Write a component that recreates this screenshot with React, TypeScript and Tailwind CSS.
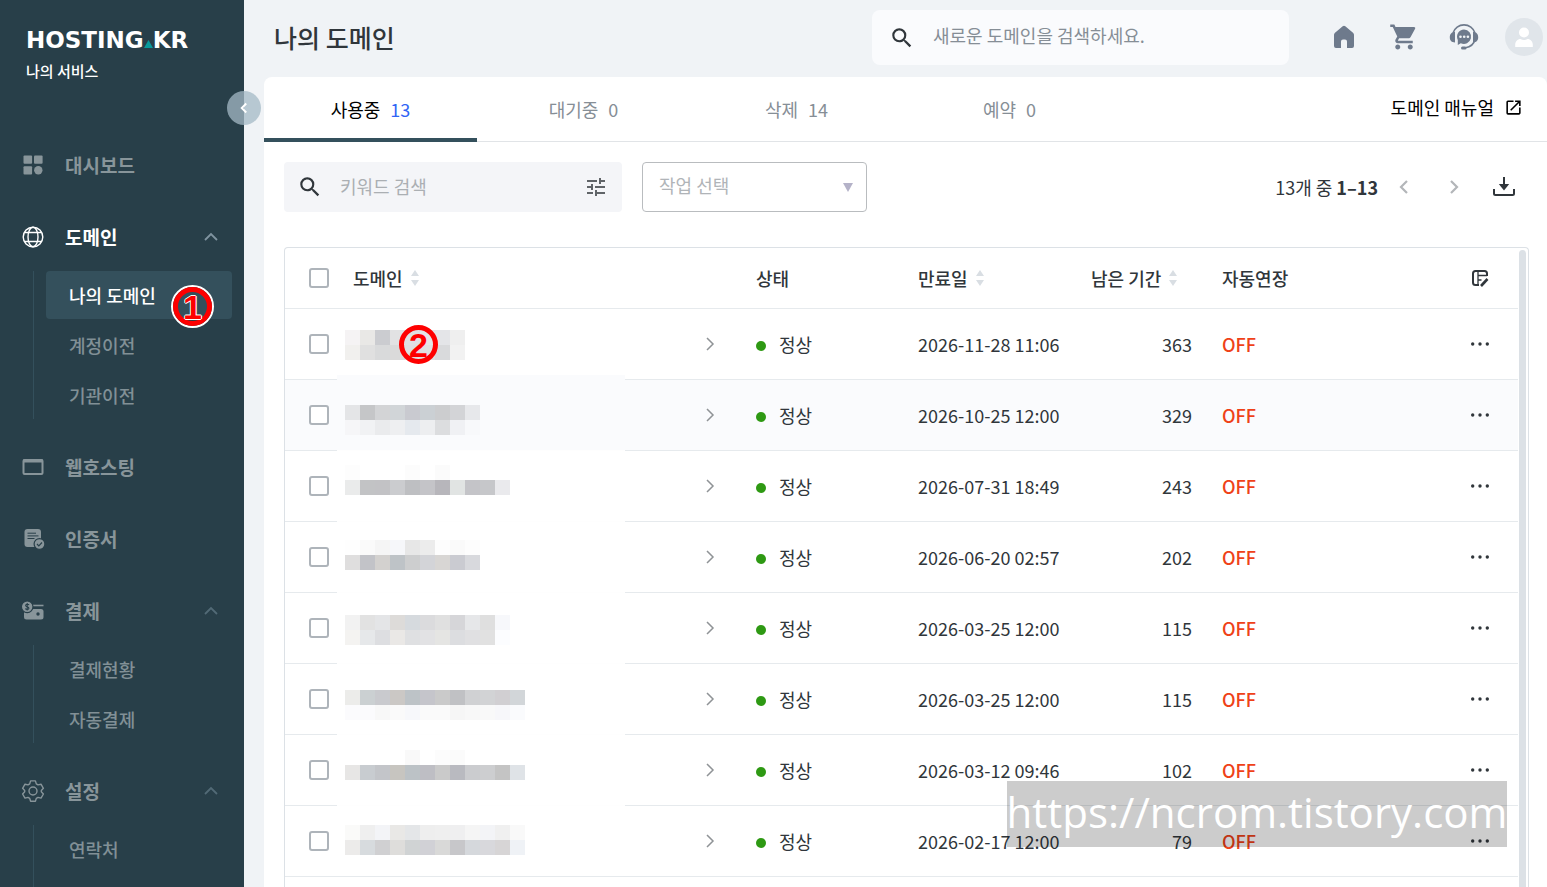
import type { ReactNode } from "react";
import { MdOpenInNew, MdSearch, MdShoppingCart, MdTune } from "react-icons/md";

type MenuEntry = {
  label: string;
  icon: ReactNode;
  active?: boolean;
  children?: { label: string; active?: boolean }[];
};

const DashboardIcon = () => (
  <svg width="24" height="24" viewBox="0 0 24 24" fill="currentColor" aria-hidden="true">
    <rect x="2.5" y="2.5" width="8.6" height="8.2" rx="1" />
    <rect x="13" y="2.5" width="8.6" height="8.2" rx="1" />
    <rect x="2.5" y="13.2" width="8.6" height="8.2" rx="1" />
    <circle cx="17.3" cy="17.3" r="4.2" />
  </svg>
);

const GlobeIcon = () => (
  <svg width="24" height="24" viewBox="0 0 24 24" fill="none" stroke="currentColor" strokeWidth="1.4" aria-hidden="true">
    <circle cx="12" cy="12" r="9.8" />
    <ellipse cx="12" cy="12" rx="5" ry="9.8" />
    <path d="M3.500 7.500h17M3.500 16.500h17" />
  </svg>
);

const WindowIcon = () => (
  <svg width="24" height="24" viewBox="0 0 24 24" fill="none" stroke="currentColor" aria-hidden="true">
    <rect x="2.500" y="5" width="19" height="14" rx="1" strokeWidth="2" />
    <path d="M2 6h20" strokeWidth="3" />
  </svg>
);

const CertificateIcon = () => (
  <svg width="24" height="24" viewBox="0 0 24 24" aria-hidden="true">
    <rect x="3.500" y="2" width="16.500" height="18" rx="3" fill="currentColor" />
    <path d="M6.500 6.200h8.500M6.500 8.900h11M6.500 11.500h7" stroke="#283f49" strokeWidth="1" />
    <circle cx="18.500" cy="17" r="5.400" fill="currentColor" stroke="#283f49" strokeWidth="1.200" />
    <path d="M16 17l1.800 1.800 3.200-3.300" fill="none" stroke="#283f49" strokeWidth="1.200" />
  </svg>
);

const PaymentIcon = () => (
  <svg width="24" height="24" viewBox="0 0 24 24" aria-hidden="true">
    <path d="M12 6.500h10.500" stroke="currentColor" strokeWidth="1.600" />
    <path d="M3 10h17a2.500 2.500 0 0 1 2.500 2.500V18a2.500 2.500 0 0 1-2.500 2.500H5.500A2.500 2.500 0 0 1 3 18z" fill="currentColor" />
    <circle cx="6.200" cy="7.800" r="5.800" fill="currentColor" stroke="#283f49" strokeWidth="1.200" />
    <path d="M8 6C7.600 5 4.600 4.800 4.600 6.500c0 1.600 3.300 1 3.300 2.700 0 1.700-3 1.500-3.500.3M6.200 4v7.600" fill="none" stroke="#283f49" strokeWidth="1.100" />
    <circle cx="17" cy="15" r="1.700" fill="#283f49" />
  </svg>
);

const GearIcon = () => (
  <svg width="24" height="24" viewBox="0 0 24 24" fill="none" stroke="currentColor" strokeWidth="1.400" strokeLinejoin="round" aria-hidden="true">
    <path d="M9.600 1.900h4.800l.9 3 1.700 1 3-.7 2.400 4.100-2.100 2.200v1.300l2.100 2.200-2.400 4.100-3-.7-1.700 1-.9 2.900H9.600l-.9-2.900-1.700-1-3 .7L1.600 15l2.100-2.200v-1.300L1.600 9.300 4 5.200l3 .7 1.700-1z" />
    <circle cx="12" cy="12" r="4" />
  </svg>
);

const menu: MenuEntry[] = [
  { label: "대시보드", icon: <DashboardIcon /> },
  {
    label: "도메인",
    icon: <GlobeIcon />,
    active: true,
    children: [{ label: "나의 도메인", active: true }, { label: "계정이전" }, { label: "기관이전" }],
  },
  { label: "웹호스팅", icon: <WindowIcon /> },
  { label: "인증서", icon: <CertificateIcon /> },
  { label: "결제", icon: <PaymentIcon />, children: [{ label: "결제현황" }, { label: "자동결제" }] },
  { label: "설정", icon: <GearIcon />, children: [{ label: "연락처" }] },
];

type Row = { date: string; days: number; top: number; tiles: [string[], string[]] };

const rows: Row[] = [
  {
    date: "2026-11-28 11:06",
    days: 363,
    top: 21,
    tiles: [
      ["#f5f3f4", "#e9e8e6", "#cbccd0", "#e2e2e3", "#e0e0e2", "#e4e5e7", "#e4e5e8", "#efefef"],
      ["#f1f0ee", "#e0e0e0", "#d9dadb", "#dadada", "#dedfe1", "#dfe0e2", "#d9dadc", "#f2f2f2"],
    ],
  },
  {
    date: "2026-10-25 12:00",
    days: 329,
    top: 25,
    tiles: [
      ["#e4e5e7", "#c5c6c8", "#d3d4d6", "#d1d5d8", "#c9cad0", "#cbd0d4", "#cccdcf", "#d3d4d7", "#e7e8eb"],
      ["#f6f6f8", "#f1f2f4", "#eaebed", "#eeeff1", "#e5e9ee", "#edeef0", "#dcdddf", "#f0f1f4", "#f8f9fb"],
    ],
  },
  {
    date: "2026-07-31 18:49",
    days: 243,
    top: 14,
    tiles: [
      ["#fdfdfd", "#ffffff", "#ffffff", "#ffffff", "#fcfcfc", "#ffffff", "#fbfbfb"],
      ["#eaebeb", "#c2c3c5", "#c2c2c5", "#cbcccf", "#bebfc2", "#c4c4c8", "#b7b6bb", "#e1e4e3", "#c4c4c8", "#c6c7ca", "#eaeaed"],
    ],
  },
  {
    date: "2026-06-20 02:57",
    days: 202,
    top: 18,
    tiles: [
      ["#fefefe", "#fafafa", "#f5f5f5", "#f6f7fa", "#e7e7e7", "#ececec", "#fdfdfd", "#fafafa", "#fdfdfd"],
      ["#dfdede", "#c2c3c8", "#d3d1cf", "#bec3c7", "#cdcecf", "#d3d4d8", "#d8d6d4", "#cacbd1", "#d8d9dd"],
    ],
  },
  {
    date: "2026-03-25 12:00",
    days: 115,
    top: 22,
    tiles: [
      ["#f2f2f2", "#e2e2e2", "#e4e5e7", "#dddbd9", "#d6dade", "#dbdbdd", "#e0e0e0", "#d6d6d9", "#e6e7e9", "#dfdfdf", "#f7f8fb"],
      ["#f4f3f1", "#e6e8ea", "#dddee1", "#eae8e6", "#dfe0e2", "#e2e2e4", "#e5e5e3", "#dcdde0", "#e0e0e2", "#e1e1e1", "#fcfdff"],
    ],
  },
  {
    date: "2026-03-25 12:00",
    days: 115,
    top: 26,
    tiles: [
      ["#ececea", "#cbd0d2", "#c9cace", "#cbc8c5", "#bdc3c7", "#c5c5cb", "#cacaca", "#c0c1c4", "#d0d1d3", "#d2d3d5", "#d1cfd2", "#d2d6d9"],
      ["#fbfbfd", "#fbfbfd", "#f8f8f8", "#fafafa", "#f7f8fb", "#fafafa", "#fafafa", "#f6f6f6", "#f8f8f8", "#f9f9f9", "#f7f7fa", "#fafbfd"],
    ],
  },
  {
    date: "2026-03-12 09:46",
    days: 102,
    top: 15,
    tiles: [
      ["#ffffff", "#ffffff", "#ffffff", "#ffffff", "#f9f9f9", "#ffffff", "#fcfcfc", "#fbfbfb"],
      ["#e7e6e5", "#c8ccd0", "#c3c5c9", "#c7c5c0", "#bcc2c6", "#bebec4", "#cacaca", "#b9bac0", "#cbcccf", "#cdced0", "#c4c4c4", "#dfe3e7"],
    ],
  },
  {
    date: "2026-02-17 12:00",
    days: 79,
    top: 19,
    tiles: [
      ["#fafaf9", "#efefef", "#f3f4f7", "#e9e8e6", "#e4e6e8", "#eeeeee", "#efefef", "#efeff0", "#f5f5f5", "#f3f4f7", "#f0f0f0", "#f9f9f9"],
      ["#ecebea", "#d7dbde", "#d0d0d2", "#dedddb", "#d0d3d4", "#d1d1d6", "#d9d9d8", "#c7c7ca", "#d5d8dc", "#d8d8dc", "#d7d5d6", "#eff2f6"],
    ],
  },
];

function Chevron({ dir, size = 14, width = 2 }: { dir: "up" | "left" | "right"; size?: number; width?: number }) {
  const paths = { up: "M2 11l6-6 6 6", left: "M11 2L5 8l6 6", right: "M5 2l6 6-6 6" };
  return (
    <svg width={size} height={size} viewBox="0 0 16 16" fill="none" stroke="currentColor" strokeWidth={width} aria-hidden="true">
      <path d={paths[dir]} />
    </svg>
  );
}

function SortMark() {
  return (
    <svg width="8" height="16" viewBox="0 0 8 16" fill="#d9dee3" aria-hidden="true">
      <path d="M4 0l4 6H0zM4 16l4-6H0z" />
    </svg>
  );
}

function StepBadge({ n }: { n: string }) {
  return (
    <span className="flex size-[39px] items-center justify-center rounded-full border-[5px] border-[#fe0000] font-['Liberation_Sans',sans-serif] text-[34px] leading-none font-bold text-[#fe0000]">
      {n}
    </span>
  );
}

function Sidebar() {
  return (
    <aside className="relative z-10 w-[244px] shrink-0 bg-[#283f49]">
      <div className="flex h-full flex-col overflow-hidden">
        <div className="px-[26px] pt-6">
          <a href="#home" aria-label="HOSTING.KR" className="flex h-8 items-center font-['DejaVu_Sans',sans-serif] text-[23px] font-bold text-white">
            HOSTING
            <svg width="9" height="16" viewBox="0 0 9 16" fill="#0a9a9a" aria-hidden="true">
              <path d="M4.500 8L9 16H0z" />
            </svg>
            KR
          </a>
          <p className="mt-1 text-[15px] leading-[22px] font-medium text-white">나의 서비스</p>
        </div>
        <nav className="mt-[59px] flex flex-col gap-6">
          {menu.map((m) => (
            <div key={m.label} className="group shrink-0">
              <button
                type="button"
                className={`flex h-12 w-full items-center pr-[25px] pl-[21px] text-left text-[19px] font-bold ${m.active ? "text-white" : "text-[#88959a]"}`}
              >
                {m.icon}
                <span className="ml-5 flex-1">{m.label}</span>
                {m.children && (
                  <span className={m.active ? "text-[#8094a0]" : "text-[#526a76]"}>
                    <Chevron dir="up" size={16} width={1.8} />
                  </span>
                )}
              </button>
              {m.children && (
                <ul className="mt-[10px] mr-3 ml-[33px] flex flex-col gap-0.5 border-l border-[#34505c] pl-3 group-last:pb-16">
                  {m.children.map((c) => (
                    <li key={c.label} className="relative">
                      <a
                        href="#menu"
                        className={`flex h-12 items-center rounded pl-[23px] text-[18px] font-medium ${c.active ? "bg-[#34505c] text-white" : "text-[#819096]"}`}
                      >
                        {c.label}
                      </a>
                      {c.active && (
                        <span className="absolute top-3.5 right-[18px] rounded-full border-2 border-white [text-shadow:1px_0_#fff,-1px_0_#fff,0_1px_#fff,0_-1px_#fff]">
                          <StepBadge n="1" />
                        </span>
                      )}
                    </li>
                  ))}
                </ul>
              )}
            </div>
          ))}
        </nav>
      </div>
      <button
        type="button"
        aria-label="메뉴 접기"
        className="absolute top-[91px] -right-[17px] flex size-[34px] items-center justify-center rounded-full bg-[#a4b9c5]/75 text-white"
      >
        <Chevron dir="left" size={12} width={2.6} />
      </button>
    </aside>
  );
}

function TopBar() {
  return (
    <header className="flex h-[77px] items-start pr-1 pl-[10px]">
      <h1 className="flex h-[76px] flex-1 items-center text-[25px] font-medium text-[#30363b]">나의 도메인</h1>
      <label className="mt-[10px] flex h-[55px] w-[417px] items-center rounded-lg bg-[#fafbfd] pl-[17px] text-[#30363b]">
        <MdSearch size={26} />
        <input
          type="search"
          aria-label="새로운 도메인 검색"
          placeholder="새로운 도메인을 검색하세요."
          className="ml-[18px] min-w-0 flex-1 bg-transparent pb-1 text-[18px] outline-none placeholder:text-[#868e96]"
        />
      </label>
      <div className="ml-10 flex h-[74px] items-center text-[#6e7a8c]">
        <a href="#home" aria-label="홈" className="flex w-[30px] justify-center">
          <svg width="22" height="24" viewBox="0 0 22 24" fill="currentColor" aria-hidden="true">
            <path d="M9.700 1.300a2 2 0 0 1 2.600 0l7.700 6.500c.6.500 1 1.200 1 2V21a2 2 0 0 1-2 2h-5v-6.500a2 2 0 0 0-2-2h-2a2 2 0 0 0-2 2V23H3a2 2 0 0 1-2-2V9.800c0-.8.4-1.500 1-2z" />
          </svg>
        </a>
        <a href="#cart" aria-label="장바구니" className="ml-[30px]">
          <MdShoppingCart size={30} />
        </a>
        <a href="#support" aria-label="고객지원" className="ml-[30px]">
          <svg width="30" height="30" viewBox="0 0 30 30" fill="none" stroke="currentColor" aria-hidden="true">
            <path d="M4 11a11.500 11.500 0 0 1 22 0M26 17.500c-1 4-4.500 7.500-9.500 8.300" strokeWidth="1.600" />
            <path d="M6 10v10.500C2.500 20.500.800 18.500.800 15.300S2.500 10 6 10zM24 10v10.500c3.500 0 5.200-2 5.200-5.200S27.500 10 24 10z" fill="currentColor" stroke="none" />
            <path d="M15 7.500a7.200 7.200 0 1 1-3.200 13.700L8.800 23V18A7.200 7.200 0 0 1 15 7.500z" fill="currentColor" stroke="none" />
            <rect x="12" y="24.500" width="5.500" height="3" rx="1.500" fill="currentColor" stroke="none" />
            <g fill="#f0f3f6" stroke="none">
              <circle cx="11.500" cy="14.800" r="1.300" />
              <circle cx="15.200" cy="14.800" r="1.300" />
              <circle cx="18.900" cy="14.800" r="1.300" />
            </g>
          </svg>
        </a>
        <button type="button" aria-label="내 계정" className="ml-[26px] flex size-[38px] items-center justify-center rounded-full bg-[#e0e5ea]">
          <svg width="20" height="22" viewBox="0 0 20 22" fill="#fff" aria-hidden="true">
            <circle cx="10" cy="6.500" r="5" />
            <path d="M1.200 21v-2.500c0-3 2.300-5.500 5.300-5.500 2 1.300 5 1.300 7 0 3 0 5.300 2.500 5.300 5.500V21z" />
          </svg>
        </button>
      </div>
    </header>
  );
}

const tabs = [
  { label: "사용중", count: 13, active: true },
  { label: "대기중", count: 0 },
  { label: "삭제", count: 14 },
  { label: "예약", count: 0 },
];

function Tabs() {
  return (
    <div className="flex h-[65px] shrink-0 border-b border-[#e1e4e7]">
      {tabs.map((t) => (
        <button
          key={t.label}
          type="button"
          className={`-mb-px flex w-[213px] items-center justify-center gap-2.5 border-b-4 pt-1 text-[18px] ${t.active ? "border-[#34505c] text-black" : "border-transparent text-[#868e96]"}`}
        >
          <span>{t.label}</span>
          <span className={t.active ? "text-[#2f64f5]" : ""}>{t.count}</span>
        </button>
      ))}
      <a href="#manual" className="mr-6 mb-1 ml-auto flex items-center gap-2.5 text-[18px] text-black">
        도메인 매뉴얼
        <MdOpenInNew size={19} />
      </a>
    </div>
  );
}

function Toolbar() {
  return (
    <div className="flex h-[50px] shrink-0 items-center">
      <div className="flex h-full w-[338px] items-center rounded bg-[#f4f5f8] pr-[14px] pl-[13px]">
        <MdSearch size={26} color="#30363b" />
        <input
          type="search"
          aria-label="키워드 검색"
          placeholder="키워드 검색"
          className="ml-[17px] min-w-0 flex-1 bg-transparent pb-0.5 text-[18px] outline-none placeholder:text-[#abafb3]"
        />
        <button type="button" aria-label="상세 필터">
          <MdTune size={24} color="#606468" />
        </button>
      </div>
      <div className="relative ml-5 h-full w-[225px]">
        <select
          aria-label="작업 선택"
          className="h-full w-full appearance-none rounded border border-[#b9bcbf] bg-white px-4 pb-1 text-[18px] text-[#b0b4b8]"
        >
          <option>작업 선택</option>
        </select>
        <svg className="pointer-events-none absolute top-[21px] right-[14px]" width="10" height="9" viewBox="0 0 10 9" fill="#b4b2c8" aria-hidden="true">
          <path d="M0 0h10L5 9z" />
        </svg>
      </div>
      <div className="mr-[14px] ml-auto flex items-center text-[#b3b6b9]">
        <p className="text-[18px] text-[#30363b]">
          13개 중 <b>1–13</b>
        </p>
        <button type="button" aria-label="이전 페이지" className="ml-[18px] flex w-4 justify-center">
          <Chevron dir="left" size={18} width={2.2} />
        </button>
        <button type="button" aria-label="다음 페이지" className="ml-[34px] flex w-4 justify-center">
          <Chevron dir="right" size={18} width={2.2} />
        </button>
        <button type="button" aria-label="내려받기" className="ml-[31px]">
          <svg width="22" height="22" viewBox="0 0 22 22" fill="none" stroke="#30363b" strokeWidth="2" aria-hidden="true">
            <path d="M1 13v4.500a1.500 1.500 0 0 0 1.500 1.500h17a1.500 1.500 0 0 0 1.500-1.500V13M11 1v9" />
            <path d="M5.800 8h10.400L11 14.500z" fill="#30363b" stroke="none" />
          </svg>
        </button>
      </div>
    </div>
  );
}

function Tick({ label }: { label: string }) {
  return <input type="checkbox" aria-label={label} className="block size-5 appearance-none rounded-[3px] border-2 border-[#aeb4ba] bg-white" />;
}

function DomainTable() {
  return (
    <div className="flex min-h-0 flex-1 overflow-hidden rounded-t border border-b-0 border-[#dce1e6]">
      <div className="min-w-0 flex-1">
        <table className="w-full table-fixed border-separate border-spacing-0 text-[18px] text-[#30363b]">
          <colgroup>
            <col className="w-[60px]" />
            <col />
            <col className="w-[162px]" />
            <col className="w-[174px]" />
            <col className="w-[130px]" />
            <col className="w-[235px]" />
            <col className="w-[76px]" />
          </colgroup>
          <thead>
            <tr className="h-[61px] text-left *:border-b *:border-[#e6eaed] *:font-medium">
              <th className="pl-6">
                <Tick label="전체 선택" />
              </th>
              <th className="pl-2">
                <button type="button" className="flex items-center gap-2">
                  도메인 <SortMark />
                </button>
              </th>
              <th className="pl-[15px]">상태</th>
              <th className="pl-[15px]">
                <button type="button" className="flex items-center gap-2">
                  만료일 <SortMark />
                </button>
              </th>
              <th className="pl-[14px]">
                <button type="button" className="flex items-center gap-2 whitespace-nowrap">
                  남은 기간 <SortMark />
                </button>
              </th>
              <th className="pl-[15px]">자동연장</th>
              <th>
                <button type="button" aria-label="열 편집" className="mx-auto block">
                  <svg width="18" height="18" viewBox="0 0 18 18" fill="none" stroke="#30363b" aria-hidden="true">
                    <path d="M8 16H4.500A2.500 2.500 0 0 1 2 13.500v-9A2.500 2.500 0 0 1 4.500 2h9A2.500 2.500 0 0 1 16 4.500V7" strokeWidth="2" />
                    <path d="M7 2v14M7 6.500h9M7 11h3.500" strokeWidth="1.300" />
                    <path d="M10 17l6.500-7" strokeWidth="2.600" />
                  </svg>
                </button>
              </th>
            </tr>
          </thead>
          <tbody>
            {rows.map((r, i) => (
              <tr key={i} className={`h-[71px] *:border-b *:border-[#e6eaed] *:p-0 ${i === 1 ? "bg-[#fafbfd]" : "bg-white"}`}>
                <td>
                  <div className="pl-6">
                    <Tick label={`${i + 1}번 도메인 선택`} />
                  </div>
                </td>
                <td>
                  <div className="relative flex h-[70px] items-center justify-between pr-[23px] text-[#8f9396]">
                    <svg width="180" height="70" viewBox="0 0 180 70" shapeRendering="crispEdges" aria-hidden="true">
                      {r.tiles.map((line, y) =>
                        line.map((c, x) => <rect key={`${y}-${x}`} x={x * 15} y={r.top + y * 15} width="15" height="15" fill={c} />),
                      )}
                    </svg>
                    <Chevron dir="right" size={16} width={1.5} />
                    {i === 0 && (
                      <span className="absolute top-4 left-[54px]">
                        <StepBadge n="2" />
                      </span>
                    )}
                    {i === 0 && <span className="absolute -bottom-px -left-2 h-[5px] w-[288px] bg-[#fafbfd]" />}
                    {i > 0 && i < rows.length - 1 && <span className="absolute -bottom-px -left-2 h-px w-[288px] bg-[#fefefe]" />}
                  </div>
                </td>
                <td>
                  <div className="flex items-center gap-[13px] pl-[15px]">
                    <span className="mt-[3px] size-[10px] rounded-full bg-[#2e9913]" />
                    정상
                  </div>
                </td>
                <td>
                  <div className="pl-[15px] whitespace-nowrap">{r.date}</div>
                </td>
                <td>
                  <div className="pr-[15px] text-right">{r.days}</div>
                </td>
                <td>
                  <div className="pl-[15px] font-medium text-[#ef4118]">OFF</div>
                </td>
                <td>
                  <button type="button" aria-label="더보기" className="mx-auto block">
                    <svg width="20" height="6" viewBox="0 0 20 6" fill="#30363b" aria-hidden="true">
                      <circle cx="2.700" cy="3" r="1.700" />
                      <circle cx="10" cy="3" r="1.700" />
                      <circle cx="17.300" cy="3" r="1.700" />
                    </svg>
                  </button>
                </td>
              </tr>
            ))}
          </tbody>
        </table>
      </div>
      <div className="mt-0.5 mr-0.5 ml-px w-[7px] shrink-0 rounded-t-full bg-[#dce1e6]" />
    </div>
  );
}

export default function App() {
  return (
    <div className="relative flex h-screen overflow-hidden bg-[#f0f3f6] font-['Noto_Sans_CJK_KR',sans-serif]">
      <Sidebar />
      <main className="flex min-w-0 flex-1 flex-col pl-5">
        <TopBar />
        <section className="flex min-h-0 flex-1 flex-col rounded-t-lg bg-white">
          <Tabs />
          <div className="flex min-h-0 flex-1 flex-col gap-[35px] pt-5 pr-[18px] pl-5">
            <Toolbar />
            <DomainTable />
          </div>
        </section>
      </main>
      <div className="pointer-events-none absolute right-10 bottom-10 z-20 flex h-[66px] w-[500px] items-center justify-center bg-black/20 pb-1 font-['Open_Sans',sans-serif] text-[42px] leading-none whitespace-nowrap text-white">
        https://ncrom.tistory.com
      </div>
    </div>
  );
}
